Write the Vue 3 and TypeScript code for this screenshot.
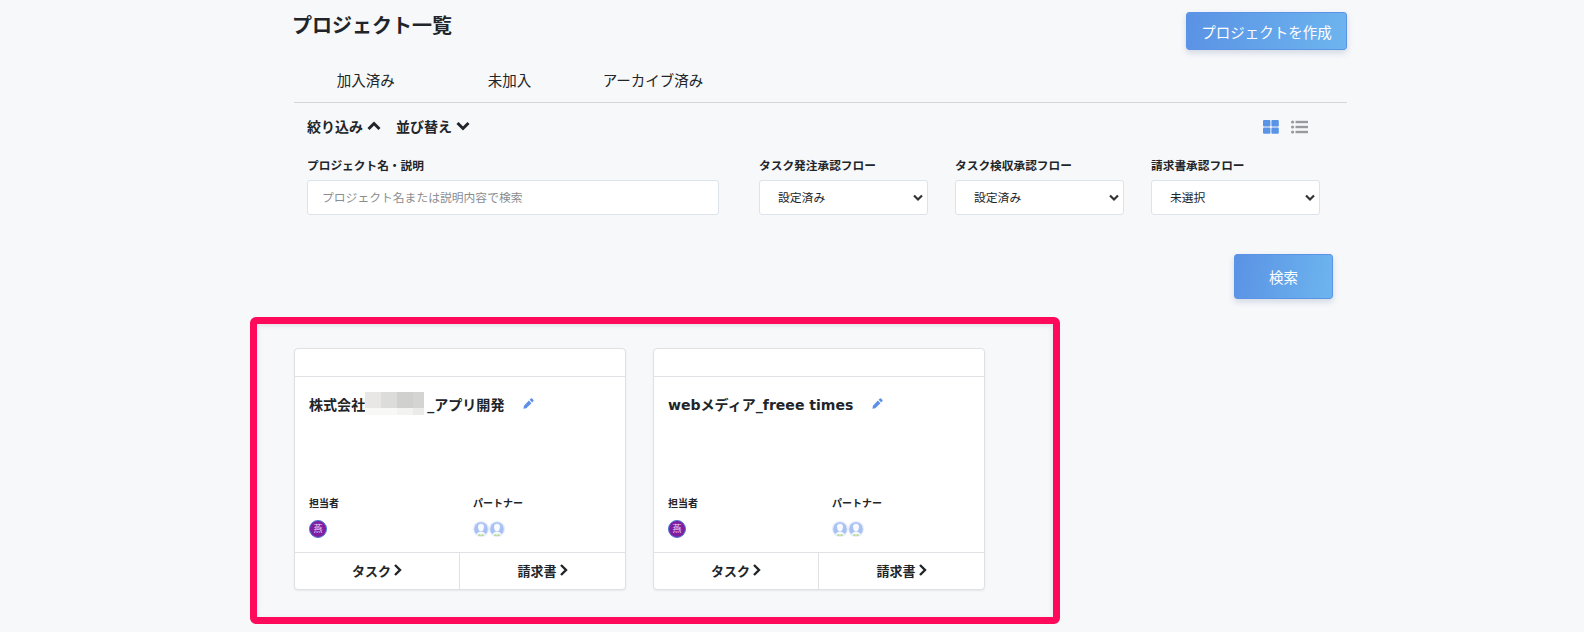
<script setup lang="ts">
type Project = {
  before: string;
  after: string;
  masked: boolean;
};

const projects: Project[] = [
  { before: "株式会社", after: "_アプリ開発", masked: true },
  { before: "webメディア_freee times", after: "", masked: false },
];

const tabs = ["加入済み", "未加入", "アーカイブ済み"];

const flows = [
  { label: "タスク発注承認フロー", options: ["設定済み", "未設定", "未選択"] },
  { label: "タスク検収承認フロー", options: ["設定済み", "未設定", "未選択"] },
  { label: "請求書承認フロー", options: ["未選択", "設定済み", "未設定"] },
];

const mosaic_top = ["#e8e7e6", "#dcdcdb", "#d0d0cf", "#d4d4d3"];
const mosaic_bottom = ["#f8f8f7", "#f8f8f7", "#f3f3f2", "#ebebea"];
</script>

<template>
  <div class="page">
    <header class="page_head">
      <h1>プロジェクト一覧</h1>
      <button class="primary create_button" type="button">プロジェクトを作成</button>
    </header>

    <nav class="tabs">
      <a v-for="tab in tabs" :key="tab" class="tab">{{ tab }}</a>
    </nav>

    <section class="filter">
      <div class="filter_bar">
        <span class="toggle">
          絞り込み
          <svg width="14" height="10" viewBox="0 0 14 10"><path d="M1.5 8 7 2.5 12.5 8" /></svg>
        </span>
        <span class="toggle">
          並び替え
          <svg width="14" height="10" viewBox="0 0 14 10"><path d="M1.5 2 7 7.5 12.5 2" /></svg>
        </span>
        <div class="view_switch">
          <svg width="16" height="14" viewBox="0 0 16 14">
            <rect x="0" y="0" width="7.4" height="6.4" rx="1" fill="#5a94e6" />
            <rect x="8.4" y="0" width="7.4" height="6.4" rx="1" fill="#5a94e6" />
            <rect x="0" y="7.4" width="7.4" height="6.4" rx="1" fill="#5a94e6" />
            <rect x="8.4" y="7.4" width="7.4" height="6.4" rx="1" fill="#5a94e6" />
          </svg>
          <svg width="17" height="14" viewBox="0 0 17 14" fill="#9a9a9e">
            <circle cx="1.6" cy="2" r="1.6" />
            <circle cx="1.6" cy="7" r="1.6" />
            <circle cx="1.6" cy="12" r="1.6" />
            <rect x="4.5" y="0.8" width="12.5" height="2.4" />
            <rect x="4.5" y="5.8" width="12.5" height="2.4" />
            <rect x="4.5" y="10.8" width="12.5" height="2.4" />
          </svg>
        </div>
      </div>

      <div class="fields">
        <label class="field field_name">
          <span>プロジェクト名・説明</span>
          <input type="text" placeholder="プロジェクト名または説明内容で検索" />
        </label>
        <label v-for="flow in flows" :key="flow.label" class="field field_flow">
          <span>{{ flow.label }}</span>
          <select>
            <option v-for="option in flow.options" :key="option">{{ option }}</option>
          </select>
        </label>
      </div>

      <div class="search_row">
        <button class="primary search_button" type="button">検索</button>
      </div>
    </section>

    <section class="cards">
      <article v-for="project in projects" :key="project.before" class="card">
        <div class="card_top"></div>
        <div class="card_body">
          <h2>
            <span>{{ project.before }}</span>
            <span v-if="project.masked" class="mosaic">
              <i v-for="color in mosaic_top" :key="color" :style="{ background: color }"></i>
              <i v-for="color in mosaic_bottom" :key="color + 'b'" :style="{ background: color }"></i>
            </span>
            <span v-if="project.after">{{ project.after }}</span>
            <svg class="pencil" width="11" height="11" viewBox="0 0 12 12">
              <path d="M8.6.6a1 1 0 0 1 1.3 0l1.5 1.5a1 1 0 0 1 0 1.3L10 4.8 7.2 2zM6.4 2.8l2.8 2.8-5.6 5.6-3.1.5.5-3.3z" fill="#5f90e8" />
            </svg>
          </h2>
          <div class="people">
            <div class="people_col">
              <h3>担当者</h3>
              <div class="avatars">
                <span class="avatar_text">燕</span>
              </div>
            </div>
            <div class="people_col">
              <h3>パートナー</h3>
              <div class="avatars">
                <svg v-for="n in 2" :key="n" class="avatar_pic" width="16" height="18" viewBox="0 0 16 18">
                  <circle cx="8" cy="9" r="8" fill="#e3ebfb" />
                  <circle cx="8" cy="9" r="6.8" fill="#a9c1f2" />
                  <path d="M5 6.5C5 4.6 6.4 3.8 8 3.8s3 .8 3 2.7c0 2.4-.8 4.8-3 4.8S5 8.9 5 6.5z" fill="#f7fafe" />
                  <path d="M3.4 14.6c.8-2.3 2.6-3.2 4.6-3.2s3.8.9 4.6 3.2c-1.2 1-2.8 1.4-4.6 1.4s-3.4-.4-4.6-1.4z" fill="#f4f8fe" />
                  <path d="M4.6 15.4c.7-1 1.6-1.4 2.4-1.4l1 1.4 1-1.4c.8 0 1.7.4 2.4 1.4-1 .5-2.1.7-3.4.7s-2.4-.2-3.4-.7z" fill="#bcdca0" />
                </svg>
              </div>
            </div>
          </div>
        </div>
        <div class="card_links">
          <a>
            タスク
            <svg width="9" height="12" viewBox="0 0 9 12"><path d="M2 1 7 6l-5 5" /></svg>
          </a>
          <a>
            請求書
            <svg width="9" height="12" viewBox="0 0 9 12"><path d="M2 1 7 6l-5 5" /></svg>
          </a>
        </div>
      </article>
    </section>

    <div class="highlight"></div>
  </div>
</template>

<style scoped>
.page {
  position: relative;
  box-sizing: border-box;
  height: 632px;
  overflow: hidden;
  padding: 12px 237px 0 292px;
  color: #212529;
  background: #f7f8fa;
  font-family: "Liberation Sans", "Noto Sans CJK JP", sans-serif;
}

.page_head {
  display: flex;
  align-items: flex-start;
  justify-content: space-between;
}

.page_head h1 {
  margin: 2px 0 0;
  font-size: 20px;
  font-weight: 700;
  line-height: 24px;
}

.primary {
  border: 1px solid #5b94e6;
  border-radius: 3px;
  color: #ffffff;
  background: linear-gradient(100deg, #5a92e4, #6db5ef);
  box-shadow: 0 3px 6px rgba(60, 90, 140, 0.2);
  font-family: inherit;
  font-size: 14.5px;
}

.create_button {
  width: 161px;
  height: 38px;
  padding: 0;
}

.tabs {
  display: flex;
  box-sizing: border-box;
  height: 53px;
  margin-left: 2px;
  border-bottom: 1px solid #d5d7da;
  padding-top: 11px;
}

.tab {
  width: 143.6px;
  font-size: 14.5px;
  line-height: 40px;
  text-align: center;
}

.filter {
  padding: 0 14px 0 15px;
}

.filter_bar {
  display: flex;
  align-items: center;
  gap: 15px;
  height: 24px;
  margin-top: 11px;
  padding-right: 25px;
}

.toggle {
  display: flex;
  align-items: center;
  gap: 4px;
  font-size: 14px;
  font-weight: 700;
}

.toggle svg path {
  fill: none;
  stroke: #212529;
  stroke-width: 3;
}

.view_switch {
  display: flex;
  align-items: center;
  gap: 12px;
  margin-top: 2px;
  margin-left: auto;
}

.fields {
  display: flex;
  gap: 27px;
  margin-top: 19px;
}

.field {
  display: flex;
  flex-direction: column;
  gap: 5px;
}

.field span {
  font-size: 11.7px;
  font-weight: 700;
  line-height: 18px;
}

.field_name {
  width: 412px;
  margin-right: 13px;
}

.field_flow {
  width: 169px;
}

.field input,
.field select {
  box-sizing: border-box;
  width: 100%;
  height: 35px;
  border: 1px solid #dde3ea;
  border-radius: 3px;
  background-color: #ffffff;
  color: #212529;
  font-family: inherit;
  font-size: 11.8px;
}

.field input {
  padding: 0 14px;
}

.field input::placeholder {
  color: #8a8d91;
}

.field select {
  padding: 0 0 0 18px;
  appearance: none;
  background-image: url("data:image/svg+xml,%3Csvg xmlns='http://www.w3.org/2000/svg' width='10' height='8' viewBox='0 0 10 8'%3E%3Cpath d='M1 1.5 5 5.5 9 1.5' fill='none' stroke='%23333' stroke-width='2.2'/%3E%3C/svg%3E");
  background-repeat: no-repeat;
  background-position: right 4px center;
}

.search_row {
  display: flex;
  justify-content: flex-end;
  margin-top: 39px;
}

.search_button {
  width: 99px;
  height: 45px;
  padding: 0;
}

.cards {
  display: flex;
  gap: 27px;
  margin-top: 49px;
  margin-left: 2px;
}

.card {
  display: flex;
  flex-direction: column;
  box-sizing: border-box;
  width: 332px;
  height: 242px;
  border: 1px solid #dfe1e5;
  border-radius: 4px;
  background: #ffffff;
  box-shadow: 0 1px 2px rgba(40, 50, 70, 0.08);
}

.card_top {
  flex: none;
  height: 27px;
  border-bottom: 1px solid #dfe1e5;
}

.card_body {
  display: flex;
  flex: 1;
  flex-direction: column;
  padding: 0 14px;
}

.card_body h2 {
  display: flex;
  align-items: center;
  height: 23px;
  margin: 15px 0 0;
  font-family: "DejaVu Sans", "Noto Sans CJK JP", sans-serif;
  font-size: 14.05px;
  font-weight: 700;
}

.mosaic {
  display: grid;
  grid-template-columns: 16px 16px 16px 11px;
  grid-template-rows: 16px 7px;
  width: 59px;
  margin-right: 3px;
}

.pencil {
  margin-left: 19px;
}

.people {
  display: flex;
  margin-top: auto;
  margin-bottom: 14px;
}

.people_col {
  flex: none;
  width: 164px;
}

.people_col h3 {
  margin: 0 0 9px;
  font-size: 10px;
  font-weight: 700;
  line-height: 14px;
}

.avatars {
  display: flex;
  height: 18px;
  align-items: center;
}

.avatar_text {
  display: grid;
  box-sizing: border-box;
  width: 18px;
  height: 18px;
  place-items: center;
  border: 1px solid #4d78d6;
  border-radius: 50%;
  color: #f0dcf5;
  background: #7f1fa0;
  font-size: 9px;
  line-height: 1;
}

.avatar_pic {
  display: block;
}

.card_links {
  display: flex;
  flex: none;
  height: 36px;
  border-top: 1px solid #dfe1e5;
}

.card_links a {
  display: flex;
  flex: 1;
  align-items: center;
  justify-content: center;
  gap: 2px;
  padding-bottom: 2px;
  box-sizing: border-box;
  font-size: 13px;
  font-weight: 700;
}

.card_links a:first-child {
  flex: 0 0 164px;
}

.card_links a + a {
  border-left: 1px solid #dfe1e5;
}

.card_links svg path {
  fill: none;
  stroke: #212529;
  stroke-width: 2.4;
}

.highlight {
  position: absolute;
  top: 317px;
  left: 250px;
  box-sizing: border-box;
  width: 810px;
  height: 307px;
  border: 7px solid #ff0a5a;
  border-radius: 6px;
  box-shadow: inset 0 2px 5px rgba(60, 70, 90, 0.12);
  pointer-events: none;
}
</style>

<style>
html,
body {
  background: #f7f8fa;
}
</style>
